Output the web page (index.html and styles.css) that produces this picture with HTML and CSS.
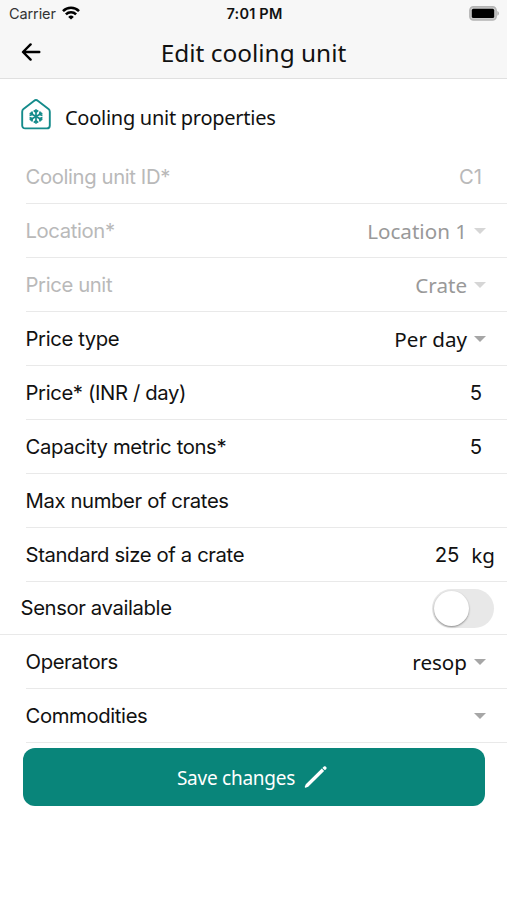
FILE: index.html
```
<!DOCTYPE html>
<html lang="en">
<head>
  <meta charset="UTF-8">
  <meta name="viewport" content="width=device-width, initial-scale=1.0">
  <title>Edit cooling unit</title>
  <link rel="stylesheet" href="styles.css">
</head>
<body>
  <header class="header">
    <div class="status-bar">
      <div class="carrier">
        <span>Carrier</span>
        <svg width="18" height="14" viewBox="0 0 18 14" fill="none" stroke="#000" stroke-width="2.6">
          <path d="M1 5.1a11.4 11.4 0 0 1 16 0"/>
          <path d="M3.9 8.4a7.3 7.3 0 0 1 10.2 0"/>
          <path d="M9 13.6L6.2 10.9a4 4 0 0 1 5.6 0z" fill="#000" stroke="none"/>
        </svg>
      </div>
      <span class="time">7:01 PM</span>
      <svg class="battery" width="31" height="15" viewBox="0 0 31 15">
        <rect x="0.8" y="0.8" width="26.4" height="13.2" rx="3.6" fill="#c8c8c8" stroke="#b4b4b4" stroke-width="1.4"/>
        <rect x="2.8" y="2.8" width="22.4" height="9.2" rx="1.6" fill="#000"/>
        <path d="M28.4 5v4.8c2-.9 2-3.9 0-4.8z" fill="#a9a9a9"/>
      </svg>
    </div>
    <div class="nav-bar">
      <svg class="back" width="20" height="18" viewBox="0 0 20 18" fill="none" stroke="#000" stroke-width="2.4" stroke-linecap="round" stroke-linejoin="round">
        <path d="M18.3 9H2.5M9.6 1.4L2 9l7.6 7.6"/>
      </svg>
      <h1>Edit cooling unit</h1>
    </div>
  </header>

  <main>
    <div class="section-title">
      <svg width="30" height="31" viewBox="0 0 30 31" fill="none" stroke="#148b8b" stroke-width="1.9" stroke-linejoin="round">
        <path d="M1.2 12.7c0-1.1.4-2 1.3-2.8L12.9 1.9c1.3-1 2.9-1 4.2 0l10.4 8c.9.8 1.3 1.7 1.3 2.8v13.7c0 1.8-1.2 3-3 3H4.2c-1.8 0-3-1.2-3-3z"/>
        <g stroke-width="1.7">
          <path id="arm" d="M15 17.5V10.3M12.8 11.3l2.2 2.2 2.2-2.2"/>
          <use href="#arm" transform="rotate(60 15 17.5)"/>
          <use href="#arm" transform="rotate(120 15 17.5)"/>
          <use href="#arm" transform="rotate(180 15 17.5)"/>
          <use href="#arm" transform="rotate(240 15 17.5)"/>
          <use href="#arm" transform="rotate(300 15 17.5)"/>
        </g>
      </svg>
      <h2>Cooling unit properties</h2>
    </div>

    <div class="form">
      <div class="row disabled">
        <label>Cooling unit ID*</label>
        <span class="value">C1</span>
      </div>
      <div class="row disabled">
        <label>Location*</label>
        <span class="select">Location 1</span>
      </div>
      <div class="row disabled">
        <label>Price unit</label>
        <span class="select">Crate</span>
      </div>
      <div class="row">
        <label>Price type</label>
        <span class="select">Per day</span>
      </div>
      <div class="row">
        <label>Price* (INR / day)</label>
        <span class="value">5</span>
      </div>
      <div class="row">
        <label>Capacity metric tons*</label>
        <span class="value">5</span>
      </div>
      <div class="row">
        <label>Max number of crates</label>
      </div>
      <div class="row">
        <label>Standard size of a crate</label>
        <span class="value with-unit">25 <span class="unit">kg</span></span>
      </div>
      <div class="row sensor">
        <label>Sensor available</label>
        <span class="toggle"><span class="knob"></span></span>
      </div>
      <div class="row">
        <label>Operators</label>
        <span class="select">resop</span>
      </div>
      <div class="row">
        <label>Commodities</label>
        <span class="select"></span>
      </div>
    </div>

    <button class="save">
      <span>Save changes</span>
      <svg width="24" height="24" viewBox="0 0 24 24" fill="#fff">
        <path d="M.8 21.8l1-2.6L17.8 3.6l2.3 2.3L4.2 21.7l-2.6 1c-.7.2-1-.3-.8-.9z"/>
        <path d="M18.4 3l1.5-1.5c1.4-1.2 3.6 1 2.4 2.4l-1.4 1.4z"/>
      </svg>
    </button>
  </main>
</body>
</html>
```

FILE: styles.css
```
* {
  box-sizing: border-box;
}
body {
  margin: 0;
  background: #fff;
  color: #111;
  font-family: 'Inter', 'Liberation Sans', sans-serif;
}
.header {
  height: 79px;
  background: #f7f7f7;
  border-bottom: 1px solid #e0e0e0;
}
.status-bar {
  display: grid;
  grid-template-columns: 1fr auto 1fr;
  align-items: center;
  height: 26px;
  padding: 0 7px 0 9px;
  font-size: 14.5px;
}
.carrier {
  display: flex;
  align-items: center;
  gap: 6px;
  color: #333;
  letter-spacing: -0.1px;
}
.time {
  font-size: 14.5px;
  font-weight: 600;
  letter-spacing: 0.2px;
}
.battery {
  justify-self: end;
}
.nav-bar {
  display: grid;
  grid-template-columns: 20px 1fr 20px;
  align-items: center;
  height: 52px;
  padding: 0 21px;
}
h1,
h2 {
  margin: 0;
  font-family: 'Noto Sans', sans-serif;
  font-weight: 400;
}
h1 {
  font-size: 24.4px;
  text-align: center;
}
.section-title {
  display: flex;
  align-items: center;
  gap: 14px;
  height: 71px;
  padding: 0 21px;
}
h2 {
  padding-top: 6px;
  font-size: 20px;
  letter-spacing: -0.27px;
}
.row {
  display: flex;
  align-items: center;
  justify-content: space-between;
  height: 54px;
  margin-left: 26px;
  padding-right: 24px;
  border-bottom: 1px solid #e9e9e9;
  font-size: 20.3px;
}
.row label {
  margin-left: -0.5px;
  letter-spacing: -0.38px;
}
.row.disabled {
  color: #b9b9b9;
}
.row.sensor {
  height: 53px;
  margin-left: 0;
  padding: 0 13px 0 21px;
}
.sensor label {
  padding-bottom: 1px;
}
.value {
  margin-right: 1px;
}
.select {
  display: flex;
  align-items: center;
  gap: 7px;
  margin-right: -3px;
  padding-top: 1px;
  font-family: 'Noto Sans', sans-serif;
  font-size: 20.6px;
}
.select::after {
  content: '';
  border: 6px solid transparent;
  border-top-color: #a6a6a6;
  border-bottom: 0;
}
.disabled .select {
  color: #999;
}
.disabled .select::after {
  border-top-color: #d6d6d6;
}
.with-unit {
  display: flex;
  align-items: center;
  gap: 12px;
  margin-right: -12px;
}
.unit {
  padding-top: 1px;
  font-family: 'Noto Sans', sans-serif;
  font-size: 20.6px;
}
.toggle {
  width: 62px;
  height: 39px;
  padding: 2px;
  border-radius: 20px;
  background: #e8e8e8;
}
.knob {
  display: block;
  width: 35px;
  height: 35px;
  border-radius: 50%;
  background: #fff;
  box-shadow: 0 1px 2px rgba(0, 0, 0, 0.4);
}
.save {
  display: flex;
  align-items: center;
  justify-content: center;
  gap: 9px;
  width: 462px;
  height: 58px;
  margin: 5px 0 0 23px;
  padding: 0 3px 0 0;
  border: none;
  border-radius: 12px;
  background: #09857a;
  color: #fff;
  font-family: 'Noto Sans', sans-serif;
  font-size: 19px;
  letter-spacing: -0.25px;
}
.save span {
  padding-top: 1px;
}
```
